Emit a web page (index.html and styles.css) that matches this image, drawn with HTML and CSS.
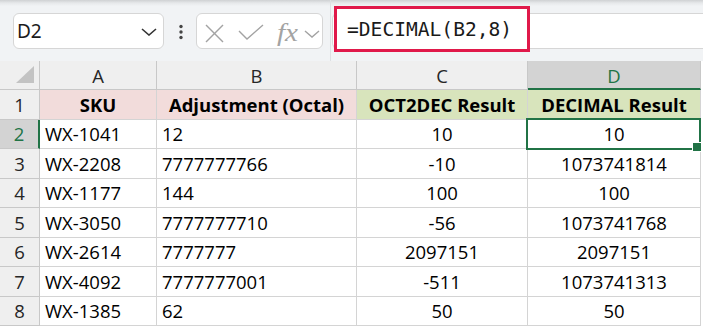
FILE: index.html
```html
<!DOCTYPE html>
<html lang="en">
<head>
<meta charset="utf-8">
<title>DECIMAL</title>
<link rel="stylesheet" href="styles.css">
</head>
<body>
<div class="toolbar">
  <div class="namebox">
    <span class="nb-text">D2</span>
    <svg class="chev" width="16" height="8" viewBox="0 0 16 8"><polyline points="1,1 8,7 15,1" fill="none" stroke="#333" stroke-width="1.6"/></svg>
  </div>
  <svg class="dots" width="6" height="16" viewBox="0 0 6 16"><circle cx="3" cy="2.5" r="1.7" fill="#444"/><circle cx="3" cy="8" r="1.7" fill="#444"/><circle cx="3" cy="13.5" r="1.7" fill="#444"/></svg>
  <div class="fnbox">
    <svg width="125" height="34" viewBox="0 0 125 34">
      <g fill="none" stroke="#a3a3a3" stroke-width="1.4">
        <line x1="9" y1="11" x2="26" y2="28"/>
        <line x1="26" y1="11" x2="9" y2="28"/>
        <polyline points="42,17 50,25 66,11"/>
        <polyline points="108,17 115,23 122,17"/>
      </g>
      <text x="80" y="27" class="fx" textLength="21" lengthAdjust="spacingAndGlyphs">fx</text>
    </svg>
  </div>
  <div class="divider"></div>
  <div class="formula">
    <div class="hl">=DECIMAL(B2,8)</div>
  </div>
</div>
<div class="sheet">
  <div class="c corner"><svg width="18" height="17" viewBox="0 0 18 17"><polygon points="0,17 18,0 18,17" fill="#c3c3c3"/></svg></div>
  <div class="c h">A</div>
  <div class="c h">B</div>
  <div class="c h">C</div>
  <div class="c h hsel">D</div>

  <div class="c rh">1</div>
  <div class="c ctr b pink">SKU</div>
  <div class="c ctr b pink">Adjustment (Octal)</div>
  <div class="c ctr b green">OCT2DEC Result</div>
  <div class="c ctr b green">DECIMAL Result</div>

  <div class="c rh rsel">2</div>
  <div class="c">WX-1041</div>
  <div class="c">12</div>
  <div class="c ctr">10</div>
  <div class="c ctr sel">10</div>

  <div class="c rh">3</div>
  <div class="c">WX-2208</div>
  <div class="c">7777777766</div>
  <div class="c ctr">-10</div>
  <div class="c ctr">1073741814</div>

  <div class="c rh">4</div>
  <div class="c">WX-1177</div>
  <div class="c">144</div>
  <div class="c ctr">100</div>
  <div class="c ctr">100</div>

  <div class="c rh">5</div>
  <div class="c">WX-3050</div>
  <div class="c">7777777710</div>
  <div class="c ctr">-56</div>
  <div class="c ctr">1073741768</div>

  <div class="c rh">6</div>
  <div class="c">WX-2614</div>
  <div class="c">7777777</div>
  <div class="c ctr">2097151</div>
  <div class="c ctr">2097151</div>

  <div class="c rh">7</div>
  <div class="c">WX-4092</div>
  <div class="c">7777777001</div>
  <div class="c ctr">-511</div>
  <div class="c ctr">1073741313</div>

  <div class="c rh">8</div>
  <div class="c">WX-1385</div>
  <div class="c">62</div>
  <div class="c ctr">50</div>
  <div class="c ctr">50</div>
</div>
</body>
</html>
```
FILE: styles.css
```css
* { box-sizing: border-box; }
html, body { margin: 0; padding: 0; }
body {
  width: 703px;
  height: 328px;
  overflow: hidden;
  background: #ffffff;
  font-family: "Open Sans", "Noto Sans", sans-serif;
}
.toolbar {
  height: 61px;
  display: flex;
  align-items: flex-start;
  padding: 13px 0 0 13px;
  background: linear-gradient(#cfd1d3 0, #e6e8ea 3px, #f1f3f5 6px, #f1f3f5 100%);
}
.namebox {
  width: 151px;
  height: 36px;
  background: #fff;
  border: 1px solid #d6d6d6;
  border-radius: 6px;
  display: flex;
  align-items: center;
  justify-content: space-between;
  padding: 0 6px 0 3px;
}
.nb-text {
  font-family: "Noto Sans", "Open Sans", sans-serif;
  font-size: 19px;
  color: #1b1b1b;
  line-height: 1;
}
.chev { margin-top: 1px; }
.dots { margin: 11px 0 0 14px; flex: none; }
.fnbox {
  margin-left: 12px;
  width: 127px;
  height: 36px;
  background: #fff;
  border: 1px solid #d6d6d6;
  border-radius: 6px;
  flex: none;
}
.fnbox svg { display: block; }
.fx {
  font-family: "Liberation Serif", "DejaVu Serif", serif;
  font-style: italic;
  font-size: 25px;
  fill: #a3a3a3;
}
.divider {
  width: 1px;
  height: 61px;
  margin: -13px 0 0 7px;
  background: #dde0e3;
  flex: none;
}
.formula {
  position: relative;
  margin-left: 1px;
  flex: 1;
  height: 36px;
  background: #fff;
  border: 1px solid #d6d6d6;
  border-right: none;
  border-radius: 6px 0 0 6px;
}
.hl {
  position: absolute;
  left: 1px;
  top: -8px;
  width: 196px;
  height: 46px;
  border: 3px solid #e0194a;
  background: #fff;
  padding: 1px 0 0 10px;
  display: flex;
  align-items: center;
  font-family: "DejaVu Sans Mono", "Liberation Mono", monospace;
  font-size: 19.6px;
  color: #1a1a1a;
  white-space: nowrap;
}
.sheet {
  width: 701px;
  display: grid;
  grid-template-columns: 40px 117px 200px 171px 173px;
  grid-template-rows: 29px repeat(8, 29.5px);
}
.c {
  display: flex;
  align-items: center;
  padding: 1px 5px 0;
  border-right: 1px solid #d4d4d4;
  border-bottom: 1px solid #d4d4d4;
  font-size: 18.5px;
  line-height: 1;
  color: #000;
  background: #fff;
  white-space: nowrap;
}
.ctr { justify-content: center; }
.b { font-weight: 700; }
.pink { background: #f2dcdb; }
.green { background: #d8e4bc; }
.h, .rh, .corner {
  background: #efefef;
  border-color: #c8c8c8;
  color: #262626;
  justify-content: center;
}
.h { padding-top: 3px; }
.corner {
  justify-content: flex-end;
  align-items: flex-end;
  padding: 0 5px 6px 0;
}
.corner svg { display: block; }
.hsel {
  background: #d3d3d3;
  color: #217346;
  border-bottom: 2px solid #217346;
}
.rsel {
  background: #d3d3d3;
  color: #217346;
  border-right: 2px solid #217346;
}
.sel { position: relative; }
.sel::before {
  content: "";
  position: absolute;
  left: -2px;
  top: -2px;
  right: -1px;
  bottom: -2px;
  border: 2px solid #217346;
}
.sel::after {
  content: "";
  position: absolute;
  right: -2px;
  bottom: -4px;
  width: 8px;
  height: 8px;
  background: #217346;
  border: 1px solid #fff;
}
```
